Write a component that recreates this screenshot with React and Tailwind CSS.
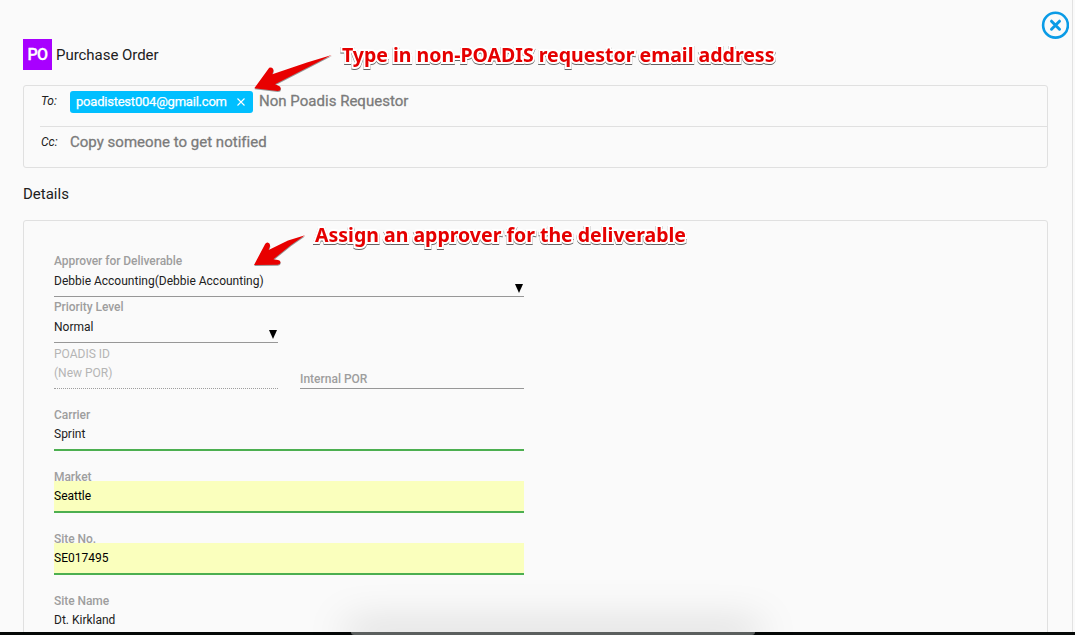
function CloseIcon() {
  return (
    <svg className="block size-7" viewBox="0 0 28 28" fill="none" stroke="#0a9be6">
      <circle cx="14.5" cy="14.2" r="12.4" strokeWidth="2.6" />
      <path d="M10.5 10.2l8 8M18.5 10.2l-8 8" strokeWidth="3" strokeLinecap="round" />
    </svg>
  );
}

function Caret() {
  return (
    <svg className="mr-px mb-[3px] block h-[9px] w-2 shrink-0" viewBox="0 0 8 9">
      <path d="M0 0h8L4 9z" fill="#000" />
    </svg>
  );
}

function SelectField({ label, value, className }) {
  return (
    <div className={`h-[46px] border-b border-[#979797] ${className}`}>
      <div className="h-5 leading-5 font-medium tracking-[-0.05px] text-[#9e9e9e]">{label}</div>
      <div className="flex h-[25px] items-end justify-between">
        <span className="h-[25px] leading-5 text-[#212121]">{value}</span>
        <Caret />
      </div>
    </div>
  );
}

function TextField({ label, value, filled }) {
  return (
    <div className="h-[46px] w-[470px]">
      <div className="h-5 leading-5 font-medium tracking-[-0.05px] text-[#9e9e9e]">{label}</div>
      <div
        className={`relative -mt-1.5 h-8 border-b-2 border-[#4caf50] pt-1.5 leading-[19px] ${
          filled ? "bg-[#faffbd] text-black" : "text-[#212121]"
        }`}
      >
        {value}
      </div>
    </div>
  );
}

function Arrow({ className, d, box }) {
  return (
    <svg className={`absolute overflow-visible ${className}`} viewBox={box}>
      <path d={d} fill="#000" opacity="0.4" transform="translate(0.3 1)" />
      <path d={d} fill="#e80000" />
    </svg>
  );
}

const noteClass =
  "absolute whitespace-nowrap font-['Noto_Sans',sans-serif] text-[19.5px] leading-6 font-bold text-[#e50000] [paint-order:stroke_fill] [-webkit-text-stroke:4px_#fff] [filter:drop-shadow(0_1px_0.6px_rgba(0,0,0,0.6))]";

export default function App() {
  return (
    <div className="relative flex h-[635px] w-[1075px] flex-col overflow-hidden bg-[#fafafa] font-[Roboto,sans-serif] text-[#212121]">
      <div className="mr-0.5 min-h-0 flex-1 overflow-hidden border-r border-[#e2e2e2] pt-[39px] pl-[23px]">
        <header className="flex h-[31px] w-[1025px] items-center">
          <div className="flex h-[31px] w-[29px] items-center justify-center bg-[#a800ff] pt-px text-base font-medium tracking-[-0.5px] text-white [-webkit-text-stroke:0.3px_#fff]">
            PO
          </div>
          <h1 className="ml-1 text-[15px] leading-5 tracking-[-0.04px]">Purchase Order</h1>
        </header>

        <section className="mt-[15px] h-[83px] w-[1025px] rounded-[3px] border border-[#e0e0e0] pl-4">
          <div className="flex h-[41px] border-b border-[#e0e0e0] pt-[5px]">
            <span className="w-[30px] pl-px text-xs leading-5 italic">To:</span>
            <div className="flex h-[22px] w-[183px] items-center justify-between rounded-[3px] bg-[#00bfff] pr-2 pl-1.5 text-[13px] text-white">
              <span className="tracking-[-0.22px] [-webkit-text-stroke:0.25px_#fff]">poadistest004@gmail.com</span>
              <svg className="size-2" viewBox="0 0 8 8" stroke="#fff" strokeWidth="1.1">
                <path d="M.5.5l7 7M7.5.5l-7 7" />
              </svg>
            </div>
            <span className="ml-1.5 text-[15px] leading-5 tracking-[0.02px] text-[#7b7b7b] [-webkit-text-stroke:0.3px_#7b7b7b]">Non Poadis Requestor</span>
          </div>
          <div className="flex pt-[5px]">
            <span className="w-[30px] pl-px text-xs leading-5 italic">Cc:</span>
            <span className="text-[15px] leading-5 tracking-[0.02px] text-[#7b7b7b] [-webkit-text-stroke:0.3px_#7b7b7b]">Copy someone to get notified</span>
          </div>
        </section>

        <h2 className="mt-4 h-5 text-[15px] leading-5">Details</h2>

        <section className="mt-4 h-[440px] w-[1025px] rounded-[3px] border border-[#e0e0e0] pt-[30px] pl-[30px] text-xs">
          <SelectField label="Approver for Deliverable" value="Debbie Accounting(Debbie Accounting)" className="w-[470px]" />
          <SelectField label="Priority Level" value="Normal" className="w-[224px]" />
          <div className="flex gap-[22px]">
            <div className="h-[46px] w-[224px] border-b border-dotted border-[#9e9e9e] pt-px text-[#b5b5b5]">
              <div className="h-5 leading-5">POADIS ID</div>
              <div className="leading-[19px]">(New POR)</div>
            </div>
            <div className="h-[46px] w-[224px] border-b border-[#979797] pt-[26px] leading-5 font-medium text-[#9e9e9e]">
              Internal POR
            </div>
          </div>
          <div className="mt-4 flex flex-col gap-4">
            <TextField label="Carrier" value="Sprint" />
            <TextField label="Market" value="Seattle" filled />
            <TextField label="Site No." value="SE017495" filled />
            <TextField label="Site Name" value="Dt. Kirkland" />
          </div>
        </section>
      </div>

      <div className="relative z-10 flex h-[3px] shrink-0 justify-center bg-[#050807]">
        <div className="mr-[-31px] h-[3px] w-[404px] rounded-b-[3px] bg-[#5b5f5e] shadow-[0_0_40px_5px_rgba(0,0,0,0.25)] [clip-path:inset(-60px_-60px_0_-60px)]" />
      </div>

      <div className="absolute top-[11px] left-[1041px]">
        <CloseIcon />
      </div>
      <Arrow
        className="top-[54px] left-[254px] h-10 w-20"
        box="254 54 80 40"
        d="M331.700 55L307 62.500L272.300 74.300L273.400 71Q273.600 67.800 270.500 67.600Q269 67.600 268.300 69L254.300 88.200L277.500 91Q280.500 91 280.700 88.500Q280.700 86.300 278.500 85.800L275 84.300L311 65.800Z"
      />
      <Arrow
        className="top-[234px] left-[254px] h-10 w-14"
        box="254 234 56 40"
        d="M305 235.200L288 240.500L268.600 250L270 246Q270.300 243 267.700 242.600Q265.800 242.500 265 244.300L254 265L277.500 264.800Q280.300 264.500 280.500 262.300Q280.500 260.300 278 260L273.300 259.300L291 245Z"
      />
      <p className={`${noteClass} top-[43px] left-[342px]`}>Type in non-POADIS requestor email address</p>
      <p className={`${noteClass} top-[223px] left-[315px]`}>Assign an approver for the deliverable</p>
    </div>
  );
}
